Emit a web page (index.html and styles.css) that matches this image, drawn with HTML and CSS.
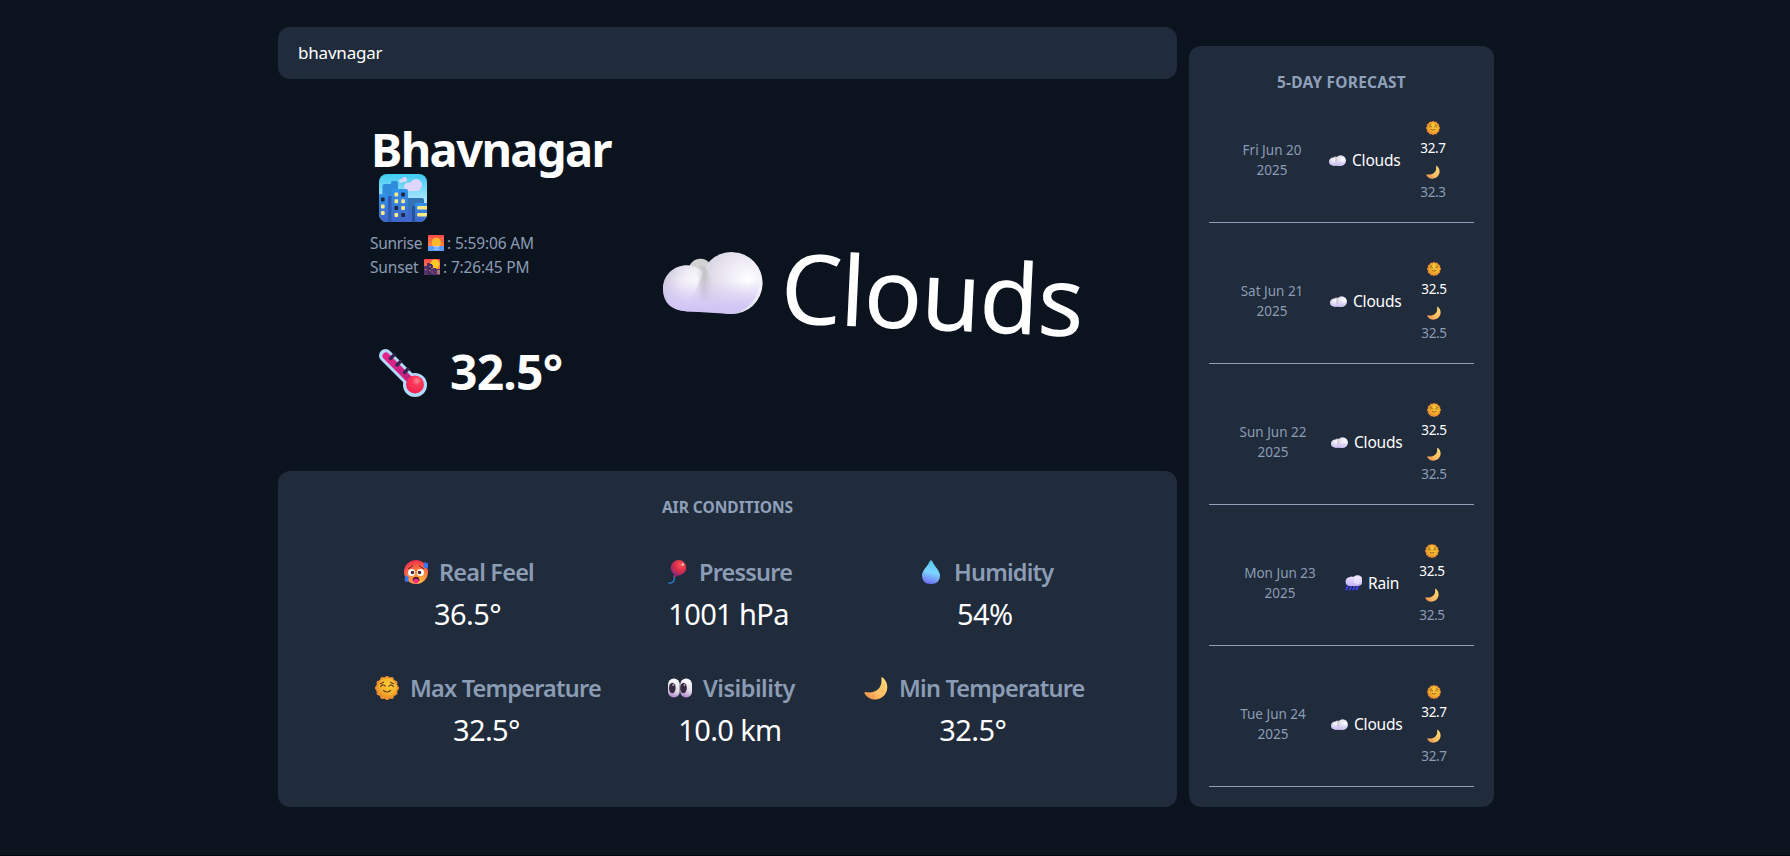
FILE: index.html
```html
<!DOCTYPE html>
<html lang="en">
<head>
<meta charset="utf-8">
<title>Weather</title>
<link rel="stylesheet" href="styles.css">
</head>
<body>
<svg class="sprite" width="0" height="0" aria-hidden="true">
  <defs>
    <linearGradient id="gSky" x1="0" y1="0" x2="0" y2="1"><stop offset="0" stop-color="#3ccdf2"/><stop offset=".6" stop-color="#b6e6ff"/></linearGradient>
    <linearGradient id="gBld" x1="0" y1="0" x2="0" y2="1"><stop offset="0" stop-color="#2f93ee"/><stop offset="1" stop-color="#4064c8"/></linearGradient>
    <linearGradient id="gSet" x1="0" y1="0" x2="0" y2="1"><stop offset="0" stop-color="#ff4b4b"/><stop offset="1" stop-color="#ff9c3c"/></linearGradient>
    <radialGradient id="gSun" cx=".6" cy=".35" r=".7"><stop offset="0" stop-color="#ffcf3a"/><stop offset=".6" stop-color="#f6b32a"/><stop offset="1" stop-color="#e8892e"/></radialGradient>
    <radialGradient id="gHot" cx=".6" cy=".9" r=".9"><stop offset="0" stop-color="#ffbd3f"/><stop offset=".5" stop-color="#ff843d"/><stop offset="1" stop-color="#ee2f4e"/></radialGradient>
    <radialGradient id="gBal" cx=".65" cy=".3" r=".75"><stop offset="0" stop-color="#ff5560"/><stop offset=".5" stop-color="#da2f45"/><stop offset="1" stop-color="#93257a"/></radialGradient>
    <linearGradient id="gDrop" x1=".6" y1="0" x2=".4" y2="1"><stop offset="0" stop-color="#55c5ee"/><stop offset=".5" stop-color="#7cd5ff"/><stop offset="1" stop-color="#6f70f5"/></linearGradient>
    <linearGradient id="gEye" x1=".6" y1="0" x2=".4" y2="1"><stop offset="0" stop-color="#fff"/><stop offset=".6" stop-color="#e3dae8"/><stop offset="1" stop-color="#b184cf"/></linearGradient>
    <linearGradient id="gMoon" x1="1" y1="0" x2="0" y2="1"><stop offset="0" stop-color="#ffe07a"/><stop offset=".6" stop-color="#fdbb62"/><stop offset="1" stop-color="#e98445"/></linearGradient>
    <radialGradient id="gPuffR" cx=".75" cy=".45" r=".72"><stop offset="0" stop-color="#fff"/><stop offset=".45" stop-color="#eeebf6"/><stop offset="1" stop-color="#d8d5e2"/></radialGradient>
    <radialGradient id="gPuffL" cx=".75" cy=".45" r=".75"><stop offset="0" stop-color="#fff"/><stop offset=".5" stop-color="#f1eef7"/><stop offset="1" stop-color="#cdc9dd"/></radialGradient>
    <linearGradient id="gBase" x1="0" y1="0" x2="0" y2="1"><stop offset=".45" stop-color="#d3c8f5" stop-opacity="0"/><stop offset=".85" stop-color="#d3c8f5" stop-opacity=".95"/><stop offset="1" stop-color="#cec2f3"/></linearGradient>
    <linearGradient id="gShade" x1="0" y1="0" x2="1" y2="0"><stop offset="0" stop-color="#b9b8b8" stop-opacity="0"/><stop offset=".5" stop-color="#b9b8b8" stop-opacity=".6"/><stop offset="1" stop-color="#c4c2cc" stop-opacity="0"/></linearGradient>
    <linearGradient id="gRain" x1="0" y1="0" x2="0" y2="1"><stop offset="0" stop-color="#eee6ff"/><stop offset="1" stop-color="#c4b3fb"/></linearGradient>
    <linearGradient id="gTube" x1="0" y1="0" x2="1" y2="1"><stop offset="0" stop-color="#e5258a"/><stop offset="1" stop-color="#b9207d"/></linearGradient>
    <radialGradient id="gBulb" cx=".6" cy=".3" r=".7"><stop offset="0" stop-color="#ff8b94"/><stop offset=".35" stop-color="#fb3859"/><stop offset="1" stop-color="#f3214f"/></radialGradient>
    <clipPath id="cTile"><rect width="48" height="48" rx="8"/></clipPath>
    <clipPath id="cTileSm"><rect width="16" height="16" rx="1"/></clipPath>
  </defs>

  <symbol id="city" viewBox="0 0 48 48"><g clip-path="url(#cTile)">
    <rect width="48" height="48" fill="url(#gSky)"/>
    <g fill="#dcd6fa"><circle cx="37" cy="11" r="6"/><circle cx="29.500" cy="13" r="4.500"/><rect x="27" y="11" width="14" height="6" rx="3"/><circle cx="25.500" cy="5.500" r="2.500"/><circle cx="22" cy="7" r="2"/></g>
    <path d="M3.500 12Q3.500 10 5.500 10H12V8.500Q12 7 14 7H17Q19 7 19 9V48H3.500Z" fill="#2f8cdc"/>
    <path d="M28 24H43Q45 24 45 26V48H28Z" fill="#3173b5"/>
    <path d="M8 22H14V48H8Z" fill="#2d5cae"/>
    <path d="M0 20H7Q9 20 9 22V48H0Z" fill="url(#gBld)"/>
    <path d="M12.500 17Q12.500 15 14.500 15H27Q29 15 29 17V48H12.500Z" fill="url(#gBld)"/>
    <path d="M29 36H31Q33 36 33 38V48H29Z" fill="#3d68c9"/><path d="M33 32H36V48H33Z" fill="#28529b"/>
    <path d="M36 31Q36 29 38 29H48V48H36Z" fill="url(#gBld)"/>
    <g fill="#ffe983"><rect x="15.500" y="18.500" width="3.600" height="4" rx=".8"/><rect x="15.500" y="25.300" width="3.600" height="4" rx=".8"/><rect x="22.300" y="25.300" width="3.600" height="4" rx=".8"/><rect x="22.300" y="32" width="3.600" height="4" rx=".8"/><rect x="15.500" y="39" width="3.600" height="4" rx=".8"/><rect x="2" y="30.500" width="3.600" height="4" rx=".8"/><rect x="2" y="37" width="3.600" height="4" rx=".8"/><rect x="38" y="32" width="12" height="3.500" rx="1.500"/><rect x="38" y="39" width="12" height="3.500" rx="1.500"/></g>
    <g fill="#20263f"><rect x="22.300" y="18.500" width="3.600" height="4" rx=".8"/><rect x="15.500" y="32" width="3.600" height="4" rx=".8"/><rect x="22.300" y="39" width="3.600" height="4" rx=".8"/><rect x="2" y="23.500" width="3.600" height="4" rx=".8"/></g>
  </g></symbol>

  <symbol id="sunrise" viewBox="0 0 16 16"><g clip-path="url(#cTileSm)">
    <rect width="16" height="16" fill="url(#gSet)"/><circle cx="8.300" cy="7.500" r="4.700" fill="#fdb92c"/><rect y="11" width="16" height="5" fill="#5a9bfd"/><path d="M5 11H12L10.500 12.500H6.500Z" fill="#b9c4ec"/><path d="M6 14.200H11" stroke="#bcd5ff" stroke-width=".9"/>
  </g></symbol>

  <symbol id="sunset" viewBox="0 0 16 16"><g clip-path="url(#cTileSm)">
    <rect width="16" height="16" fill="url(#gSet)"/><circle cx="11" cy="5" r="4.500" fill="#ffc928"/><path d="M0 7H3V4H6V6H9V9H12V10H16V16H0Z" fill="#56306c"/><path d="M4 5H8V16H4Z" fill="#462a62"/><path d="M5.500 7.500h1M7.500 9.500h1M5.500 11.500h1M1.200 10.500h1M7.500 13h1M13 12h3M13 14h3" stroke="#f2c96e" stroke-width="1"/>
  </g></symbol>

  <symbol id="thermometer" viewBox="0 0 48 48">
    <path d="M6.500 6.500L36 36" stroke="#b1dafc" stroke-width="13" stroke-linecap="round"/><circle cx="36" cy="36" r="12" fill="#b1dafc"/>
    <path d="M7 7L34 34" stroke="url(#gTube)" stroke-width="7" stroke-linecap="round"/>
    <path d="M11.500 9.500L15 6M18 16L21.500 12.500M25.500 23.500L29 20" stroke="#33244d" stroke-width="3.300" stroke-linecap="round"/>
    <circle cx="36" cy="35.500" r="9" fill="url(#gBulb)"/>
  </symbol>

  <symbol id="cloud" viewBox="0 0 100 62">
    <circle cx="37" cy="19" r="12" fill="#d2d2d2"/>
    <path d="M24 14C37 14 47 25 47 38C47 52 38 60 24 60C10 60 0 50 0 37C0 24 11 14 24 14Z" fill="url(#gPuffL)"/>
    <path d="M24 60H69V25H38Z" fill="#e9e5f3"/>
    <circle cx="68.500" cy="30.500" r="31" fill="url(#gPuffR)"/>
    <path d="M33 17C40 9 44 18 50 30L48 50H36Q34 30 33 17Z" fill="url(#gShade)"/>
    <path d="M24 60Q0 59 0 37Q4 18 24 16L47 10Q52 0 68 0A31 31 0 0 1 69 61.500Z" fill="url(#gBase)"/>
  </symbol>

  <symbol id="rain" viewBox="0 0 17 16">
    <path d="M2.500 11.500L1.300 14.500M6 11.500L4.800 14.500M9.500 11.500L8.300 14.500M12.800 11.500L11.500 14.500" stroke="#4242f4" stroke-width="1.900" stroke-linecap="round"/>
    <path d="M4.200 2.300Q7 .7 8.500 2A5.400 5.400 0 1 1 12 11H4.500A4.400 4.400 0 0 1 4.200 2.300Z" fill="url(#gRain)"/><circle cx="12.300" cy="5.300" r="3.800" fill="#f2ecff" opacity=".6"/>
  </symbol>

  <symbol id="hot" viewBox="0 0 24 24">
    <circle cx="12" cy="12" r="12" fill="url(#gHot)"/>
    <circle cx="7.500" cy="12.500" r="3.500" fill="#fff"/><circle cx="16.500" cy="12.500" r="3.500" fill="#fff"/><circle cx="8.500" cy="12.500" r="1.700" fill="#3f2439"/><circle cx="15.500" cy="12.500" r="1.700" fill="#3f2439"/>
    <path d="M4.500 8.500Q7.500 8 8.500 5.500M19.500 8.500Q16.500 8 15.500 5.500" fill="none" stroke="#65212d" stroke-width="1" stroke-linecap="round"/>
    <path d="M8.500 21Q8.500 16.800 12 16.800T15.500 21Z" fill="#56192e"/><path d="M9.500 19.500Q12 17.800 14.500 19.500V21.500Q14.500 23.500 12 23.500T9.500 21.500Z" fill="#ff2c91"/>
    <path d="M20.500 2L24 3.500V6.500Q24 8.500 22 8.500T19.500 6.500ZM1.500 15L4.500 17V20Q5.500 22 3.300 22T.5 20Z" fill="#3c75f3"/>
  </symbol>

  <symbol id="balloon" viewBox="0 0 20 24">
    <path d="M6.300 16V18.500Q6.300 23.200 .7 23.200" fill="none" stroke="#2b83dc" stroke-width="1.300" stroke-linecap="round"/><path d="M6.200 14L8.800 16.200L5.800 17.500Z" fill="#b72b62"/>
    <path d="M10.800 0A7.500 7.700 0 0 1 18.300 7.700C18.300 12.500 14 15.500 7.800 15.800Q2.800 12 2.800 7.700A8 7.700 0 0 1 10.800 0Z" fill="url(#gBal)"/><circle cx="14.800" cy="4.500" r="1.300" fill="#ffc0c4"/>
  </symbol>

  <symbol id="drop" viewBox="0 0 24 24"><path d="M12 .3Q13 .3 13.700 1.900C15.500 6.300 21 10.500 21 15.500Q21 24 12 24T3 15.500C3 10.500 8.500 6.300 10.300 1.900Q11 .3 12 .3Z" fill="url(#gDrop)"/></symbol>

  <symbol id="sun" viewBox="0 0 24 24">
    <path d="M12 0L14.500 1.800L17.700 1.600L18.900 4.500L21.900 5.700L21.800 8.900L24 12L21.800 15.100L21.900 18.300L18.900 19.500L17.700 22.400L14.500 22.200L12 24L9.500 22.200L6.300 22.400L5.100 19.500L2.100 18.300L2.200 15.100L0 12L2.200 8.900L2.100 5.700L5.100 4.500L6.300 1.600L9.500 1.800Z" fill="#ee9132" stroke="#ee9132" stroke-linejoin="round"/>
    <circle cx="12" cy="12" r="10" fill="url(#gSun)"/>
    <path d="M5.700 10.500Q8 7.300 10.200 10.200M13.800 10.200Q16 7.300 18.300 10.500M8.500 14.500Q12 17.500 15.500 14.500M5.500 7.800L8.500 6.200M18.500 7.800L15.500 6.200" fill="none" stroke="#684022" stroke-width="1.200" stroke-linecap="round"/>
  </symbol>

  <symbol id="eyes" viewBox="0 0 24 24">
    <rect y="2.500" width="11.700" height="19" rx="5.800" fill="url(#gEye)"/><rect x="12.300" y="2.500" width="11.700" height="19" rx="5.800" fill="url(#gEye)"/>
    <ellipse cx="4.300" cy="12" rx="3.300" ry="5.300" fill="#36283f"/><ellipse cx="15.500" cy="12" rx="3.300" ry="5.300" fill="#36283f"/><circle cx="5.200" cy="9" r="1" fill="#b6a7c0"/><circle cx="16.500" cy="9" r="1" fill="#b6a7c0"/>
  </symbol>

  <symbol id="moon" viewBox="0 0 24 24"><path d="M17.300 1.600Q18 .8 19 1.800C23 5.300 24.500 11 22.300 16C18.500 25 6 26.500 .6 17.500Q0 15.800 1.600 16C6 17 11.500 16.200 14.800 12.500C17.500 9.500 17.800 5.500 17.300 1.600Z" fill="url(#gMoon)"/><g fill="#e59a4b" opacity=".65"><circle cx="18.500" cy="15" r="1"/><circle cx="9" cy="20" r="1.200"/><circle cx="20" cy="9" r=".8"/></g></symbol>
</svg>

<main class="app">
  <div class="main">
    <div class="search"><span class="search-text">bhavnagar</span></div>

    <section class="current">
      <div class="info">
        <h1 class="city-name">Bhavnagar</h1>
        <svg class="icon-48 city-icon"><use href="#city"/></svg>
        <p class="sun-line"><span class="w-sunrise">Sunrise</span><svg class="icon-16"><use href="#sunrise"/></svg><span>: 5:59:06 AM</span></p>
        <p class="sun-line"><span class="w-sunset">Sunset</span><svg class="icon-16"><use href="#sunset"/></svg><span>: 7:26:45 PM</span></p>
        <div class="temp"><svg class="icon-48"><use href="#thermometer"/></svg><span class="temp-value">32.5°</span></div>
      </div>
      <div class="condition"><svg class="condition-icon"><use href="#cloud"/></svg><span class="condition-text">Clouds</span></div>
    </section>

    <section class="air">
      <h2 class="card-title">AIR CONDITIONS</h2>
      <div class="air-row first">
        <div class="metric"><div class="label"><svg class="icon-24"><use href="#hot"/></svg><span>Real Feel</span></div><div class="value">36.5°</div></div>
        <div class="metric"><div class="label"><svg class="icon-balloon"><use href="#balloon"/></svg><span>Pressure</span></div><div class="value">1001 hPa</div></div>
        <div class="metric"><div class="label"><svg class="icon-24"><use href="#drop"/></svg><span>Humidity</span></div><div class="value">54%</div></div>
      </div>
      <div class="air-row second">
        <div class="metric"><div class="label"><svg class="icon-24"><use href="#sun"/></svg><span>Max Temperature</span></div><div class="value">32.5°</div></div>
        <div class="metric"><div class="label wide"><svg class="icon-24"><use href="#eyes"/></svg><span>Visibility</span></div><div class="value">10.0 km</div></div>
        <div class="metric"><div class="label"><svg class="icon-24"><use href="#moon"/></svg><span>Min Temperature</span></div><div class="value">32.5°</div></div>
      </div>
    </section>
  </div>

  <aside class="forecast">
    <h2 class="card-title">5-DAY FORECAST</h2>
    <div class="day fri"><div class="date">Fri Jun 20<br>2025</div><div class="sky"><svg class="sky-icon"><use href="#cloud"/></svg><span>Clouds</span></div><div class="range"><svg class="icon-14"><use href="#sun"/></svg><span class="hi">32.7</span><svg class="icon-14"><use href="#moon"/></svg><span class="lo">32.3</span></div></div>
    <div class="day sat"><div class="date">Sat Jun 21<br>2025</div><div class="sky"><svg class="sky-icon"><use href="#cloud"/></svg><span>Clouds</span></div><div class="range"><svg class="icon-14"><use href="#sun"/></svg><span class="hi">32.5</span><svg class="icon-14"><use href="#moon"/></svg><span class="lo">32.5</span></div></div>
    <div class="day sunday"><div class="date">Sun Jun 22<br>2025</div><div class="sky"><svg class="sky-icon"><use href="#cloud"/></svg><span>Clouds</span></div><div class="range"><svg class="icon-14"><use href="#sun"/></svg><span class="hi">32.5</span><svg class="icon-14"><use href="#moon"/></svg><span class="lo">32.5</span></div></div>
    <div class="day mon"><div class="date">Mon Jun 23<br>2025</div><div class="sky"><svg class="sky-icon rainy"><use href="#rain"/></svg><span>Rain</span></div><div class="range"><svg class="icon-14"><use href="#sun"/></svg><span class="hi">32.5</span><svg class="icon-14"><use href="#moon"/></svg><span class="lo">32.5</span></div></div>
    <div class="day tue"><div class="date">Tue Jun 24<br>2025</div><div class="sky"><svg class="sky-icon"><use href="#cloud"/></svg><span>Clouds</span></div><div class="range"><svg class="icon-14"><use href="#sun"/></svg><span class="hi">32.7</span><svg class="icon-14"><use href="#moon"/></svg><span class="lo">32.7</span></div></div>
  </aside>
</main>
</body>
</html>
```
FILE: styles.css
```css
* { box-sizing: border-box; }
body {
  margin: 0;
  height: 856px;
  overflow: hidden;
  background: #0b131e;
  border-bottom: 1px solid #05060b;
  color: #fff;
  font-family: "Noto Sans", "Open Sans", sans-serif;
}
h1, h2, p { margin: 0; }
svg { display: block; flex: none; }
.sprite { position: absolute; }
.icon-48 { width: 48px; height: 48px; }
.icon-24 { width: 24px; height: 24px; }
.icon-balloon { width: 20px; height: 24px; }
.icon-16 { width: 16px; height: 16px; }
.icon-14 { width: 14px; height: 14px; }

.app { display: flex; gap: 12px; padding: 27px 0 0 278px; }
.main { width: 899px; }

.search {
  height: 52px;
  padding: 0 20px;
  border-radius: 12px;
  background: #202b3b;
  display: flex;
  align-items: center;
}
.search-text { font-size: 17px; line-height: 26px; letter-spacing: -0.2px; }

.current { height: 392px; display: flex; }
.info { width: 382px; padding: 46px 0 0 92px; }
.city-name { font-size: 47px; line-height: 48px; font-weight: 700; letter-spacing: -1.6px; padding-left: 1px; }
.city-icon { margin: 1px 0 9px 9px; }
.sun-line {
  display: flex;
  height: 24px;
  font-size: 15.5px;
  line-height: 24px;
  letter-spacing: -0.15px;
  color: #8b9cb5;
  white-space: pre;
}
.sun-line svg { margin: 4px 3px 0 0; }
.w-sunrise { width: 58px; letter-spacing: -0.3px; }
.w-sunset { width: 54px; }
.temp { display: flex; gap: 23px; margin: 70px 0 0 9px; }
.temp-value { font-size: 48px; line-height: 46px; font-weight: 700; letter-spacing: -0.8px; }

.condition {
  display: flex;
  gap: 18px;
  width: 422px;
  height: 110px;
  margin-top: 155px;
  padding-left: 3px;
  transform: rotate(2.7deg);
}
.condition-icon { width: 100px; height: 63px; margin-top: 25px; transform: rotate(-1deg); }
.condition-text { font-size: 97px; line-height: 110px; letter-spacing: -1.5px; }

.air { height: 336px; padding-top: 24px; border-radius: 12px; background: #202b3b; }
.card-title {
  font-size: 15.5px;
  line-height: 24px;
  font-weight: 700;
  color: #8fa0ba;
  text-align: center;
}
.forecast .card-title { letter-spacing: 0.2px; margin-bottom: -12px; }
.air-row { display: grid; height: 116px; }
.first { grid-template-columns: 264px 251px 136px; padding-left: 126px; margin-top: 35px; }
.second { grid-template-columns: 293px 196px 222px; padding-left: 97px; }
.metric { width: max-content; }
.label {
  display: flex;
  gap: 11px;
  height: 37px;
  font-size: 23.5px;
  line-height: 36px;
  font-weight: 600;
  letter-spacing: -0.8px;
  color: #8b9cb5;
}
.wide { letter-spacing: -0.5px; }
.label svg { margin-top: 6px; }
.value { font-size: 29px; line-height: 46px; letter-spacing: -0.6px; text-align: center; padding-right: 3px; }

.forecast {
  width: 305px;
  height: 761px;
  margin-top: 19px;
  padding: 24px 20px 0;
  border-radius: 12px;
  background: #202b3b;
}
.day {
  display: flex;
  height: 141px;
  border-bottom: 1px solid #8fa0ba;
}
.date {
  width: 80px;
  padding-top: 58px;
  font-size: 13.5px;
  line-height: 20px;
  color: #8b9cb5;
  text-align: center;
}
.sky { display: flex; gap: 6px; padding-top: 66px; font-size: 15.5px; line-height: 24px; letter-spacing: -0.2px; }
.sky-icon { width: 17px; height: 11px; margin-top: 7px; }
.rainy { height: 16px; margin-top: 4px; }
.range {
  display: flex;
  flex-direction: column;
  align-items: center;
  width: 40px;
  margin-left: auto;
  padding-top: 39px;
  font-size: 13.5px;
  line-height: 20px;
  letter-spacing: -0.3px;
}
.range .hi { margin: 3px 0 7px; }
.range .lo { margin-top: 3px; color: #8b9cb5; }

.fri .date { margin: 0 17px 0 23px; }
.fri { padding-right: 21px; }
.sat .date { margin: 0 18px 0 23px; }
.sat { padding-right: 20px; }
.sunday .date, .tue .date { margin: 0 18px 0 24px; }
.sunday, .tue { padding-right: 20px; }
.mon .date { margin: 0 25px 0 31px; }
.mon { padding-right: 22px; }
```
